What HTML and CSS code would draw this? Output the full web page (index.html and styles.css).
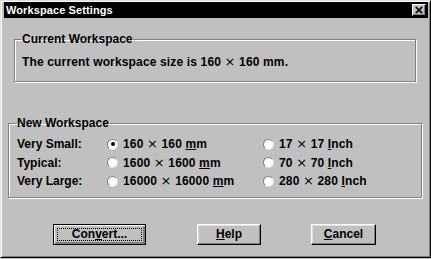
FILE: index.html
```html
<!DOCTYPE html>
<html>
<head>
<meta charset="utf-8">
<link rel="stylesheet" href="styles.css">
</head>
<body>
<div class="window">
  <div class="titlebar">
    <span class="title">Workspace Settings</span>
    <span class="close">×</span>
  </div>
  <fieldset class="group current">
    <legend>Current Workspace</legend>
    <div class="info">The current workspace size is 160 <span class="x">×</span> 160 mm.</div>
  </fieldset>
  <fieldset class="group new">
    <legend>New Workspace</legend>
    <div class="grid">
      <span class="lbl">Very Small:</span>
      <span class="opt"><span class="radio on"></span><span>160 <span class="x">×</span> 160 <u>m</u>m</span></span>
      <span class="opt"><span class="radio"></span><span>17 <span class="x">×</span> 17 <u>I</u>nch</span></span>
      <span class="lbl">Typical:</span>
      <span class="opt"><span class="radio"></span><span>1600 <span class="x">×</span> 1600 <u>m</u>m</span></span>
      <span class="opt"><span class="radio"></span><span>70 <span class="x">×</span> 70 <u>I</u>nch</span></span>
      <span class="lbl">Very Large:</span>
      <span class="opt"><span class="radio"></span><span>16000 <span class="x">×</span> 16000 <u>m</u>m</span></span>
      <span class="opt"><span class="radio"></span><span>280 <span class="x">×</span> 280 <u>I</u>nch</span></span>
    </div>
  </fieldset>
  <div class="buttons">
    <button class="btn default convert"><span class="focus">Con<u>v</u>ert...</span></button>
    <button class="btn help"><u>H</u>elp</button>
    <button class="btn cancel"><u>C</u>ancel</button>
  </div>
</div>
</body>
</html>
```
FILE: styles.css
```css
html, body {
  margin: 0;
  padding: 0;
  background: #c0c0c0;
}
body {
  font-family: "Liberation Sans", Arial, sans-serif;
  font-weight: bold;
  font-size: 12px;
  color: #000;
}
.window {
  box-sizing: border-box;
  width: 431px;
  height: 258px;
  padding: 1px 2px 2px 2px;
  border: 1px solid;
  border-color: #dfdfdf #000 #000 #dfdfdf;
  box-shadow: inset 1px 1px #fff, inset -1px -1px #808080;
  background: #c0c0c0;
  display: flex;
  flex-direction: column;
}
.titlebar {
  height: 16px;
  background: #000;
  color: #fff;
  display: flex;
  align-items: center;
  justify-content: space-between;
  padding-left: 2px;
  margin-left: 1px;
}
.title {
  font-size: 11px;
  line-height: 16px;
  letter-spacing: 0.1px;
}
.close {
  width: 14px;
  height: 12px;
  box-sizing: border-box;
  background: #c0c0c0;
  color: #000;
  border: 1px solid;
  border-color: #fff #000 #000 #fff;
  box-shadow: inset -1px -1px #808080;
  font-size: 15px;
  line-height: 9px;
  text-align: center;
  margin-right: 2px;
}
.x {
  font-family: "DejaVu Sans", sans-serif;
  font-weight: normal;
  font-size: 13px;
  line-height: 12px;
}
.group {
  margin: 0;
  border: 1px solid #808080;
  box-shadow: inset 1px 1px #fff, 1px 1px #fff;
}
.group legend {
  padding: 0 1px;
  margin-left: -1px;
  line-height: 14px;
}
.current {
  margin: 14px 12px 0 11px;
  padding: 9px 7px 12px 7px;
}
.info {
  line-height: 14px;
  letter-spacing: 0.15px;
}
.new {
  margin: 34px 6px 0 5px;
  padding: 5px 8px 6px 8px;
}
.grid {
  display: grid;
  grid-template-columns: 90px 156px 1fr;
  grid-auto-rows: 18.5px;
  align-items: center;
}
.opt {
  display: flex;
  align-items: center;
  letter-spacing: 0.15px;
  line-height: 14px;
}
.radio {
  width: 11px;
  height: 11px;
  box-sizing: border-box;
  border-radius: 50%;
  background: #fff;
  border: 1px solid;
  border-color: #808080 #dfdfdf #dfdfdf #808080;
  margin-right: 5px;
  display: flex;
  align-items: center;
  justify-content: center;
  flex: none;
}
.radio.on::after {
  content: "";
  width: 4px;
  height: 4px;
  border-radius: 50%;
  background: #000;
}
.buttons {
  display: flex;
  margin-top: 26px;
  padding-left: 50px;
}
.btn {
  font: inherit;
  height: 21px;
  box-sizing: border-box;
  background: #c0c0c0;
  color: #000;
  border: 1px solid;
  border-color: #fff #000 #000 #fff;
  box-shadow: inset -1px -1px #808080, inset 1px 1px #dfdfdf;
  padding: 0;
  display: flex;
  align-items: center;
  justify-content: center;
}
.btn.default {
  border-color: #000;
  box-shadow: inset 1px 1px #fff, inset -2px -2px #808080;
  padding: 3px;
}
.focus {
  flex: 1;
  align-self: stretch;
  display: flex;
  align-items: center;
  justify-content: center;
  border: 1px dotted #000;
}
.convert { width: 93px; }
.help { width: 64px; margin-left: 51px; }
.cancel { width: 65px; margin-left: 50px; }
```
